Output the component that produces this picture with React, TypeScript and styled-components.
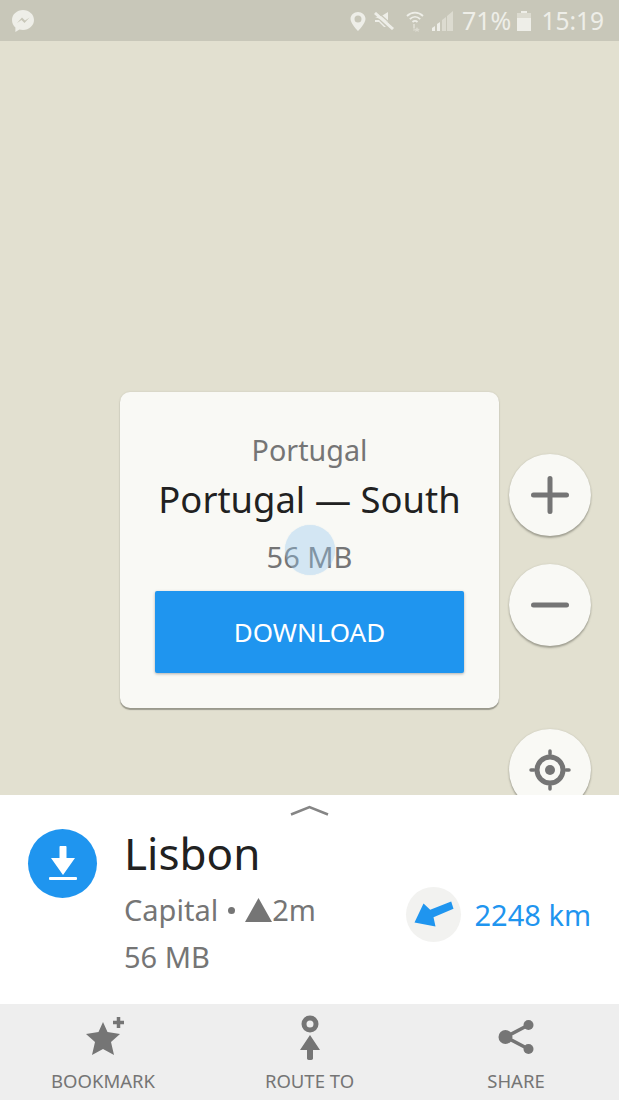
import React from "react";
import styled, { createGlobalStyle } from "styled-components";

const Global = createGlobalStyle`
  html, body { margin: 0; padding: 0; background: #e2e0d0; }
  * { box-sizing: border-box; }
  #root { font-family: "Noto Sans", "Open Sans", sans-serif; }
`;

const Screen = styled.div`
  width: 619px;
  height: 1100px;
  display: flex;
  flex-direction: column;
  overflow: hidden;
`;

const StatusBar = styled.div`
  height: 41px;
  background: #c8c7b9;
  display: flex;
  align-items: center;
  justify-content: space-between;
  padding: 0 15px 0 11px;
  flex: none;
`;

const StatusGroup = styled.div`
  display: flex;
  align-items: center;
`;

const StatusIcon = styled.svg<{ $ml: number }>`
  display: block;
  flex: none;
  margin-left: ${(p) => p.$ml}px;
`;

const StatusText = styled.span<{ $ml: number; $size: number }>`
  font-size: ${(p) => p.$size}px;
  line-height: 41px;
  margin-left: ${(p) => p.$ml}px;
  color: #eeeee8;
`;

const Map = styled.div`
  height: 754px;
  flex: none;
  background: #e2e0d0;
  padding: 351px 0 0 120px;
  display: flex;
  gap: 10px;
  align-items: flex-start;
  overflow: hidden;
`;

const Card = styled.div`
  position: relative;
  width: 379px;
  height: 316px;
  background: #f9f9f5;
  border-radius: 10px;
  box-shadow: 0 2px 1px rgba(90, 90, 80, 0.5), 0 0 2px rgba(90, 90, 80, 0.2);
  display: flex;
  flex-direction: column;
  align-items: center;
  padding-top: 39px;
`;

const Country = styled.div`
  font-size: 28.700px;
  line-height: 38px;
  color: #757575;
`;

const Region = styled.div`
  font-size: 36.400px;
  line-height: 50px;
  margin-top: 5px;
  color: #212121;
`;

const Size = styled.div`
  font-size: 29px;
  line-height: 38px;
  margin-top: 14px;
  color: #757575;
`;

const Touch = styled.div`
  position: absolute;
  left: 165px;
  top: 133px;
  width: 50px;
  height: 50px;
  border-radius: 50%;
  background: rgba(150, 200, 240, 0.38);
  box-shadow: 0 0 1px rgba(150, 200, 240, 0.5);
`;

const DownloadButton = styled.div`
  margin-top: 15px;
  width: 309px;
  height: 82px;
  background: #1f95ef;
  border-radius: 2px;
  box-shadow: 0 1px 3px rgba(0, 0, 0, 0.3);
  color: #fff;
  font-size: 26px;
  display: flex;
  align-items: center;
  justify-content: center;
`;

const Controls = styled.div`
  padding-top: 62px;
  display: flex;
  flex-direction: column;
`;

const RoundButton = styled.div<{ $mt: number }>`
  width: 82px;
  height: 82px;
  margin-top: ${(p) => p.$mt}px;
  border-radius: 50%;
  background: #f9f9f5;
  box-shadow: 0 2px 2px rgba(90, 90, 80, 0.45), 0 0 2px rgba(90, 90, 80, 0.2);
  display: flex;
  align-items: center;
  justify-content: center;
  flex: none;
`;

const Panel = styled.div`
  position: relative;
  height: 209px;
  flex: none;
  background: #fff;
  display: flex;
  padding: 34px 28px 0 28px;
`;

const Handle = styled.svg`
  position: absolute;
  left: 290px;
  top: 10px;
`;

const DownloadBadge = styled.div`
  width: 69px;
  height: 69px;
  border-radius: 50%;
  background: #1f95ef;
  display: flex;
  align-items: center;
  justify-content: center;
  flex: none;
`;

const Info = styled.div`
  margin-left: 27px;
  margin-top: -6px;
  display: flex;
  flex-direction: column;
`;

const Title = styled.div`
  font-size: 44px;
  line-height: 60px;
  color: #212121;
`;

const Sub = styled.div<{ $mt: number }>`
  display: flex;
  align-items: center;
  font-size: 29px;
  line-height: 38px;
  margin-top: ${(p) => p.$mt}px;
  color: #757575;
`;

const Distance = styled.div`
  margin-left: auto;
  margin-top: 57px;
  display: flex;
  align-items: center;
  height: 56px;
  gap: 14px;
  color: #1f95ef;
  font-size: 29px;
`;

const ArrowCircle = styled.div`
  width: 55px;
  height: 55px;
  border-radius: 50%;
  background: #f2f2f0;
  display: flex;
  align-items: center;
  justify-content: center;
`;

const Toolbar = styled.div`
  height: 96px;
  flex: none;
  background: #eeeeee;
  display: flex;
`;

const Tool = styled.div<{ $w: number }>`
  width: ${(p) => p.$w}px;
  display: flex;
  flex-direction: column;
  align-items: center;
  padding-top: 11px;
  color: #757575;
  font-size: 18.500px;
`;

const ToolIcon = styled.svg`
  display: block;
  flex: none;
`;

const ToolLabel = styled.span`
  margin-top: 8px;
  line-height: 24px;
`;

const ICON = "#eeeee8";
const DIM = "#dcdbd0";

export default function App() {
  return (
    <Screen>
      <Global />
      <StatusBar>
        <svg width="24" height="24" viewBox="0 0 24 24">
          <path
            fill={ICON}
            d="M12 1C6 1 1 5.400 1 11c0 3 1.300 5.600 3.400 7.400V23l4-2.500c1.100.3 2.300.5 3.600.5 6 0 11-4.400 11-10C23 5.400 18 1 12 1z"
          />
          <path fill="#c8c7b9" d="M6 14l5-5.500 3 3 4.500-3-5 5.500-3-3z" />
        </svg>
        <StatusGroup>
          <StatusIcon $ml={0} width="16" height="20" viewBox="0 0 16 20">
            <path
              fill={ICON}
              fillRule="evenodd"
              d="M8 1C4 1 .5 4 .5 8c0 4.500 7.500 12 7.500 12s7.500-7.500 7.500-12C15.500 4 12 1 8 1zm0 3.500a3.500 3.500 0 1 1 0 7 3.500 3.500 0 0 1 0-7z"
            />
          </StatusIcon>
          <StatusIcon $ml={8} width="20" height="18" viewBox="0 0 20 18">
            <path fill={ICON} d="M1 5h5l8-5v10z M5 8l7 7-2 0-5-5H1V8z" />
            <path stroke={ICON} strokeWidth="3" d="M1 1l18 16" />
            <path stroke="#c8c7b9" strokeWidth="1.200" d="M3.500 0l16 14" />
          </StatusIcon>
          <StatusIcon $ml={12} width="18" height="22" viewBox="0 0 18 22">
            <path
              fill="none"
              stroke={ICON}
              strokeWidth="1.800"
              d="M1 6C5.500 1.500 12.500 1.500 17 6M3.800 9.200C7 6 11 6 14.200 9.200M6.500 12c1.700-1.500 3.300-1.500 5 0"
            />
            <path fill={DIM} d="M7 14h2v4H7z M7.500 18h1v3h-1z M11 17l1 1.700 1.800.3-1.300 1.200.3 1.800-1.800-.9-1.800.9.300-1.800-1.300-1.200 1.800-.3z" />
          </StatusIcon>
          <StatusIcon $ml={8} width="21" height="20" viewBox="0 0 21 20">
            <path fill={ICON} d="M0 20v-3l3-2v5z M5 20v-7l3-2v9z" />
            <path fill={DIM} d="M10 20V9l4-3v14z M15 20V5l6-5v20z" />
          </StatusIcon>
          <StatusText $ml={9} $size={25}>71%</StatusText>
          <StatusIcon $ml={6} width="14" height="20" viewBox="0 0 14 20">
            <path fill={ICON} d="M4 0h6v2h4v18H0V2h4z" />
            <path fill={DIM} d="M0 2h14v5H0z" />
          </StatusIcon>
          <StatusText $ml={10} $size={24.500}>15:19</StatusText>
        </StatusGroup>
      </StatusBar>

      <Map>
        <Card>
          <Country>Portugal</Country>
          <Region>Portugal — South</Region>
          <Size>56 MB</Size>
          <Touch />
          <DownloadButton>DOWNLOAD</DownloadButton>
        </Card>
        <Controls>
          <RoundButton $mt={0}>
            <svg width="38" height="38" viewBox="0 0 38 38">
              <path stroke="#757575" strokeWidth="5" strokeLinecap="round" d="M2.500 19h33M19 2.500v33" />
            </svg>
          </RoundButton>
          <RoundButton $mt={28}>
            <svg width="38" height="38" viewBox="0 0 38 38">
              <path stroke="#757575" strokeWidth="5" strokeLinecap="round" d="M2.500 19h33" />
            </svg>
          </RoundButton>
          <RoundButton $mt={83}>
            <svg width="42" height="42" viewBox="0 0 42 42">
              <circle cx="21" cy="21" r="13" fill="none" stroke="#757575" strokeWidth="5" />
              <circle cx="21" cy="21" r="5" fill="#757575" />
              <path stroke="#757575" strokeWidth="3.500" strokeLinecap="round" d="M21 2v3M21 37v3M2 21h3M37 21h3" />
            </svg>
          </RoundButton>
        </Controls>
      </Map>

      <Panel>
        <Handle width="39" height="12" viewBox="0 0 39 12">
          <path fill="none" stroke="#858585" strokeWidth="2.500" d="M1 9.500L19.500 2 38 9.500" />
        </Handle>
        <DownloadBadge>
          <svg width="28" height="35" viewBox="0 0 28 35">
            <path fill="#fff" d="M10.500 1c0-.6.400-1 1-1h5c.6 0 1 .4 1 1v11H26L14 29 2 12h8.500z" />
            <rect fill="#fff" x="0" y="31" width="28" height="3" rx="1" />
          </svg>
        </DownloadBadge>
        <Info>
          <Title>Lisbon</Title>
          <Sub $mt={8}>
            Capital
            <svg style={{ margin: "0 9px 0 9px" }} width="9" height="9" viewBox="0 0 9 9">
              <circle cx="4.500" cy="4.500" r="3.500" fill="#757575" />
            </svg>
            <svg width="27" height="24" viewBox="0 0 27 24">
              <path fill="#757575" d="M13.500 0L27 24H0z" />
            </svg>
            2m
          </Sub>
          <Sub $mt={9}>56 MB</Sub>
        </Info>
        <Distance>
          <ArrowCircle>
            <svg width="42" height="32" viewBox="0 0 42 32">
              <path fill="#1f95ef" d="M2.500 24.500L11.500 5.500 18.200 11.800 39.200 3.500 41.500 10.800 21.500 19.200 23.500 28.500z" />
            </svg>
          </ArrowCircle>
          2248 km
        </Distance>
      </Panel>

      <Toolbar>
        <Tool $w={206}>
          <ToolIcon width="42" height="46" viewBox="0 0 42 46">
            <path
              fill="#757575"
              d="M21 7l4.500 10L38 19l-9 8 3 13-11-6-11 6 3-13-9-8 12.500-2z"
            />
            <path stroke="#757575" strokeWidth="3.500" d="M31 7.500h11M36.500 2v11" />
          </ToolIcon>
          <ToolLabel>BOOKMARK</ToolLabel>
        </Tool>
        <Tool $w={207}>
          <ToolIcon width="22" height="46" viewBox="0 0 22 46">
            <circle cx="11" cy="9" r="6" fill="none" stroke="#757575" strokeWidth="5" />
            <path fill="#757575" d="M11 20l10 15h-7v8.500c0 2-6 2-6 0V35H1z" />
          </ToolIcon>
          <ToolLabel>ROUTE TO</ToolLabel>
        </Tool>
        <Tool $w={206}>
          <ToolIcon width="38" height="46" viewBox="0 0 38 46">
            <path stroke="#757575" strokeWidth="3.500" fill="none" d="M31.500 10L8.500 22l23 12" />
            <circle cx="8.500" cy="22" r="7" fill="#757575" />
            <circle cx="31.500" cy="10" r="5" fill="#757575" />
            <circle cx="31.500" cy="34" r="5" fill="#757575" />
          </ToolIcon>
          <ToolLabel>SHARE</ToolLabel>
        </Tool>
      </Toolbar>
    </Screen>
  );
}
